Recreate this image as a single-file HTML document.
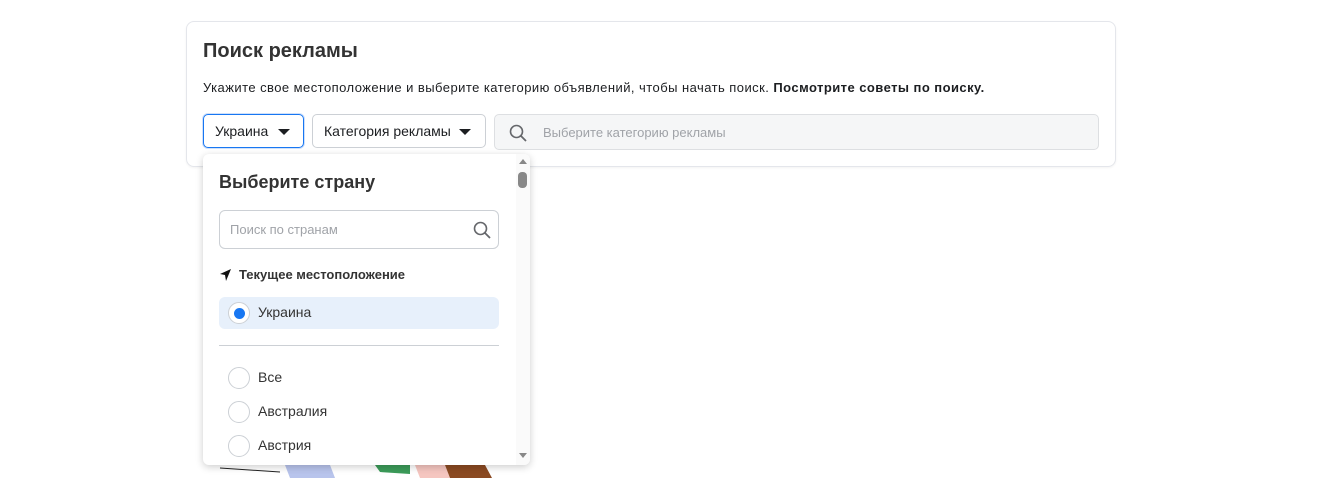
<!DOCTYPE html>
<html><head><meta charset="utf-8"><style>
body{margin:0;width:1322px;height:478px;background:#fff;font-family:"Liberation Sans",Arial,sans-serif;position:relative;overflow:hidden;color:#1c1e21}
.card{position:absolute;left:186px;top:21px;width:928px;height:144px;border:1px solid #e4e6eb;border-radius:8px;box-shadow:0 1px 2px rgba(0,0,0,.05)}
h1{position:absolute;left:16px;top:18px;margin:0;font-size:20px;font-weight:bold;color:#333}
.desc{position:absolute;left:16px;top:58px;font-size:13px;letter-spacing:0.45px;color:#1c1e21}
.btn{position:absolute;top:92px;height:34px;border:1px solid #ccd0d5;border-radius:5px;box-sizing:border-box;font-size:14px;line-height:32px;padding-left:11px;color:#1c1e21}
.tri{position:absolute;top:14px;width:0;height:0;border-left:6px solid transparent;border-right:6px solid transparent;border-top:6px solid #1c1e21}
.search{position:absolute;left:307px;top:92px;width:605px;height:36px;background:#f5f6f7;border:1px solid #dddfe2;border-radius:5px;box-sizing:border-box;font-size:13px;color:#a0a3a8;line-height:36px;padding-left:48px}
.dd{position:absolute;left:203px;top:154px;width:327px;height:311px;background:#fff;border-radius:6px;box-shadow:0 2px 8px rgba(0,0,0,.2);overflow:hidden}
.dd h2{position:absolute;left:16px;top:18px;margin:0;font-size:18px;font-weight:bold;color:#333}
.cs{position:absolute;left:16px;top:56px;width:280px;height:39px;border:1px solid #ccd0d5;border-radius:6px;box-sizing:border-box;font-size:13px;color:#a0a3a8;line-height:37px;padding-left:10px}
.loc{position:absolute;left:36px;top:113px;font-size:13px;font-weight:bold;color:#333}
.sel{position:absolute;left:16px;top:143px;width:280px;height:32px;background:#e7f0fb;border-radius:6px}
.radio{position:absolute;width:22px;height:22px;border:1px solid #ccd0d5;border-radius:50%;box-sizing:border-box;background:#fff}
.lbl{position:absolute;left:55px;font-size:14px;color:#333}
.hr{position:absolute;left:16px;top:191px;width:280px;height:1px;background:#ccd0d5}
</style></head><body>
<div class="card">
<h1>Поиск рекламы</h1>
<div class="desc">Укажите свое местоположение и выберите категорию объявлений, чтобы начать поиск. <b>Посмотрите советы по поиску.</b></div>
<div class="btn" style="left:16px;width:101px;border-color:#1877f2;box-shadow:0 0 0 1px #cfe0fa">Украина<div class="tri" style="left:74px"></div></div>
<div class="btn" style="left:125px;width:174px">Категория рекламы<div class="tri" style="left:146px"></div></div>
<div class="search"><svg style="position:absolute;left:14px;top:9px" width="18" height="18" viewBox="0 0 18 18"><circle cx="7.5" cy="7.5" r="6" fill="none" stroke="#65676b" stroke-width="1.6"/><path d="M12 12l5 5" stroke="#65676b" stroke-width="1.8"/></svg>Выберите категорию рекламы</div>
</div>
<svg style="position:absolute;left:200px;top:460px" width="300" height="18"><path d="M20 8 L80 12" stroke="#222" stroke-width="1"/><polygon points="85,5 130,5 135,18 90,18" fill="#b8c4ec"/><polygon points="175,5 210,5 210,14 180,12" fill="#3c9c5a"/><polygon points="215,5 245,5 250,18 220,18" fill="#f5c6c0"/><polygon points="245,5 285,5 292,18 250,18" fill="#8b4a22"/></svg>
<div class="dd">
<h2>Выберите страну</h2>
<div class="cs">Поиск по странам<svg style="position:absolute;left:253px;top:10px" width="18" height="18" viewBox="0 0 18 18"><circle cx="7.5" cy="7.5" r="6" fill="none" stroke="#65676b" stroke-width="1.6"/><path d="M12 12l5 5" stroke="#65676b" stroke-width="1.8"/></svg></div>
<svg style="position:absolute;left:17px;top:115px" width="12" height="12" viewBox="0 0 12 12"><path d="M11 0L0 5l5 1 1 6z" fill="#111"/></svg>
<div class="loc">Текущее местоположение</div>
<div class="sel"></div>
<div class="radio" style="left:25px;top:148px"><div style="position:absolute;left:5px;top:5px;width:11px;height:11px;border-radius:50%;background:#1877f2"></div></div>
<div class="lbl" style="top:150px">Украина</div>
<div class="hr"></div>
<div class="radio" style="left:25px;top:213px"></div><div class="lbl" style="top:215px">Все</div>
<div class="radio" style="left:25px;top:247px"></div><div class="lbl" style="top:249px">Австралия</div>
<div class="radio" style="left:25px;top:281px"></div><div class="lbl" style="top:283px">Австрия</div>
<div style="position:absolute;left:313px;top:0;width:14px;height:311px;background:#fafafa"></div>
<div style="position:absolute;left:316px;top:5px;border-left:4px solid transparent;border-right:4px solid transparent;border-bottom:5px solid #888"></div>
<div style="position:absolute;left:315px;top:18px;width:9px;height:16px;border-radius:4px;background:#888"></div>
<div style="position:absolute;left:316px;top:299px;border-left:4px solid transparent;border-right:4px solid transparent;border-top:5px solid #888"></div>
</div>
</body></html>
